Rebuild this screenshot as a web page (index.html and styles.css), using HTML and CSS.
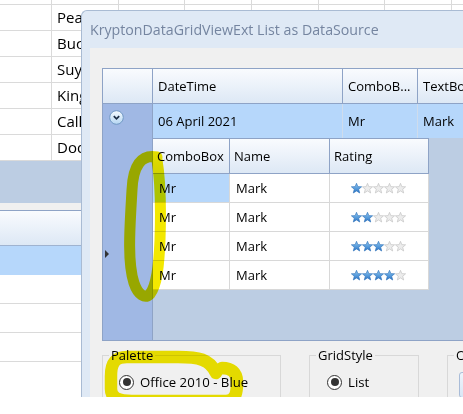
FILE: index.html
```html
<!DOCTYPE html>
<html>
<head>
<meta charset="utf-8">
<title>KryptonDataGridViewExt List as DataSource</title>
<link rel="stylesheet" href="styles.css">
</head>
<body>
<svg class="defs" width="0" height="0" aria-hidden="true">
  <defs>
    <linearGradient id="starBlue" x1="0" y1="0" x2="0" y2="1">
      <stop offset="0" stop-color="#8ecaf4"/>
      <stop offset="1" stop-color="#2a74c6"/>
    </linearGradient>
    <linearGradient id="expGrad" x1="0" y1="0" x2="0" y2="1">
      <stop offset="0" stop-color="#f6fbff"/>
      <stop offset="1" stop-color="#b5d6f2"/>
    </linearGradient>
    <symbol id="starOn" viewBox="0 0 11 11">
      <polygon points="5.5,0.3 6.85,3.64 10.6,3.8 7.69,6.21 8.7,10 5.5,7.9 2.3,10 3.31,6.21 0.4,3.8 4.15,3.64" fill="url(#starBlue)" stroke="#3878bd" stroke-width="0.7"/>
    </symbol>
    <symbol id="starOff" viewBox="0 0 11 11">
      <polygon points="5.5,0.3 6.85,3.64 10.6,3.8 7.69,6.21 8.7,10 5.5,7.9 2.3,10 3.31,6.21 0.4,3.8 4.15,3.64" fill="#ececec" stroke="#c4c4c4" stroke-width="0.7"/>
    </symbol>
  </defs>
</svg>
<div class="desk">
  <div class="sheet">
    <div class="srow first"><div></div><div></div><div></div><div></div><div></div><div></div><div></div><div></div></div>
    <div class="srow"><div></div><div>Peach</div><div></div><div></div><div></div><div></div><div></div><div></div></div>
    <div class="srow"><div></div><div>Buck</div><div></div><div></div><div></div><div></div><div></div><div></div></div>
    <div class="srow"><div></div><div>Suyama</div><div></div><div></div><div></div><div></div><div></div><div></div></div>
    <div class="srow"><div></div><div>King</div><div></div><div></div><div></div><div></div><div></div><div></div></div>
    <div class="srow"><div></div><div>Callahan</div><div></div><div></div><div></div><div></div><div></div><div></div></div>
    <div class="srow"><div></div><div>Dodsworth</div><div></div><div></div><div></div><div></div><div></div><div></div></div>
  </div>
  <div class="band"></div>
  <div class="gap"></div>
  <div class="bgrid">
    <div class="bhead"></div>
    <div class="bsel"></div>
    <div class="brow"></div>
    <div class="brow"></div>
    <div class="brow"></div>
  </div>

  <div class="window">
    <div class="titlebar">KryptonDataGridViewExt List as DataSource</div>
    <div class="client">
      <div class="dgv">
        <div class="dgv-head">
          <div class="hc"></div>
          <div class="hc">DateTime</div>
          <div class="hc">ComboB...</div>
          <div class="hc">TextBox</div>
        </div>
        <div class="dgv-body">
          <div class="rowhead">
            <svg class="exp" width="15" height="15" viewBox="0 0 15 15">
              <circle cx="7.5" cy="7.5" r="6.8" fill="url(#expGrad)" stroke="#7098c3" stroke-width="1"/>
              <path d="M4.8 6.2 L7.5 8.9 L10.2 6.2" fill="none" stroke="#1c2d44" stroke-width="1.7"/>
            </svg>
            <div class="cur"></div>
          </div>
          <div class="maincol">
            <div class="row1">
              <div class="dc">06 April 2021</div>
              <div class="dc">Mr</div>
              <div class="dc">Mark</div>
            </div>
            <div class="detail">
              <div class="sub">
                <div class="sub-head">
                  <div class="hc">ComboBox</div>
                  <div class="hc">Name</div>
                  <div class="hc">Rating</div>
                </div>
                <div class="sub-row">
                  <div class="sc sel">Mr</div>
                  <div class="sc">Mark</div>
                  <div class="sc rate">
                    <svg width="56" height="11" viewBox="0 0 56 11"><use href="#starOn" x="0" width="11" height="11"/><use href="#starOff" x="11" width="11" height="11"/><use href="#starOff" x="22" width="11" height="11"/><use href="#starOff" x="33" width="11" height="11"/><use href="#starOff" x="44" width="11" height="11"/></svg>
                  </div>
                </div>
                <div class="sub-row">
                  <div class="sc">Mr</div>
                  <div class="sc">Mark</div>
                  <div class="sc rate">
                    <svg width="56" height="11" viewBox="0 0 56 11"><use href="#starOn" x="0" width="11" height="11"/><use href="#starOn" x="11" width="11" height="11"/><use href="#starOff" x="22" width="11" height="11"/><use href="#starOff" x="33" width="11" height="11"/><use href="#starOff" x="44" width="11" height="11"/></svg>
                  </div>
                </div>
                <div class="sub-row">
                  <div class="sc">Mr</div>
                  <div class="sc">Mark</div>
                  <div class="sc rate">
                    <svg width="56" height="11" viewBox="0 0 56 11"><use href="#starOn" x="0" width="11" height="11"/><use href="#starOn" x="11" width="11" height="11"/><use href="#starOn" x="22" width="11" height="11"/><use href="#starOff" x="33" width="11" height="11"/><use href="#starOff" x="44" width="11" height="11"/></svg>
                  </div>
                </div>
                <div class="sub-row">
                  <div class="sc">Mr</div>
                  <div class="sc">Mark</div>
                  <div class="sc rate">
                    <svg width="56" height="11" viewBox="0 0 56 11"><use href="#starOn" x="0" width="11" height="11"/><use href="#starOn" x="11" width="11" height="11"/><use href="#starOn" x="22" width="11" height="11"/><use href="#starOn" x="33" width="11" height="11"/><use href="#starOff" x="44" width="11" height="11"/></svg>
                  </div>
                </div>
              </div>
            </div>
          </div>
        </div>
      </div>

      <div class="groups">
        <fieldset class="grp palette">
          <legend>Palette</legend>
          <div class="opt"><span class="radio on"></span><span>Office 2010 - Blue</span></div>
          <div class="opt"><span class="radio"></span><span>Office 2010 - Silver</span></div>
        </fieldset>
        <fieldset class="grp gridstyle">
          <legend>GridStyle</legend>
          <div class="opt"><span class="radio on"></span><span>List</span></div>
        </fieldset>
        <fieldset class="grp other">
          <legend>Other</legend>
          <div class="btn"></div>
        </fieldset>
      </div>
    </div>
  </div>

  <svg class="ink" width="463" height="397" viewBox="0 0 463 397">
    <path d="M157 157 C141 154 133 166 132 190 C130 225 127 262 134 283 C138 295 145 299 150 294 C157 285 159 265 160 240 C161 210 161 184 157 160" fill="none" stroke="#f3e800" stroke-width="11" stroke-linecap="round" stroke-linejoin="round"/>
    <path d="M216 373 C210 359 198 357 178 357 L127 357 C114 357 111 364 111 376 L111 389 C111 398 118 401 132 401 L226 401 C236 401 237 392 237 382 C237 372 231 368 222 368" fill="none" stroke="#f3e800" stroke-width="12.5" stroke-linecap="round" stroke-linejoin="round"/>
  </svg>
</div>
</body>
</html>
```

FILE: styles.css
```css
* {
  box-sizing: border-box;
}

html,
body {
  margin: 0;
  padding: 0;
  background: #ffffff;
}

body {
  font-family: "Open Sans", "Noto Sans", sans-serif;
  color: #000000;
  width: 463px;
  height: 414px;
  overflow: hidden;
}

.defs {
  display: block;
}

.desk {
  position: relative;
  width: 463px;
  height: 414px;
  overflow: hidden;
  background: #ffffff;
}

/* background spreadsheet */
.srow {
  display: grid;
  grid-template-columns: 52px 67px 66px 67px 67px 66px 67px 67px;
  height: 26px;
  border-bottom: 1px solid #dadada;
}

.srow.first {
  height: 5px;
}

.srow > div {
  border-right: 1px solid #dadada;
  font-size: 15px;
  line-height: 25px;
  padding-left: 5px;
  white-space: nowrap;
  overflow: hidden;
}

.band {
  height: 42px;
  background: #bccde3;
}

.gap {
  height: 7px;
  background: #f0f0f0;
}

.bhead {
  height: 36px;
  border-top: 1px solid #8ea3c6;
  border-bottom: 1px solid #9fb3d0;
  background: linear-gradient(#f9fbfe, #dde8f5);
}

.bsel {
  height: 29px;
  background: #b6d7fb;
}

.brow {
  height: 29px;
  border-bottom: 1px solid #dadada;
}

/* window */
.window {
  position: absolute;
  left: 81px;
  top: 10px;
  width: 400px;
  height: 387px;
  background: #dfe9f5;
  border-top: 1px solid #a9bbd3;
  border-left: 1px solid #a9bbd3;
  border-top-left-radius: 6px;
  overflow: hidden;
  display: flex;
  flex-direction: column;
}

.titlebar {
  height: 37px;
  flex: none;
  display: flex;
  align-items: center;
  padding-left: 8px;
  font-size: 14.2px;
  color: #7585a0;
  white-space: nowrap;
}

.client {
  flex: 1;
  margin-left: 8px;
  background: #f0f0f0;
  padding: 20px 0 0 12px;
  display: flex;
  flex-direction: column;
}

/* outer grid */
.dgv {
  height: 273px;
  flex: none;
  border: 1px solid #8ea3c6;
  border-right: none;
  display: flex;
  flex-direction: column;
  font-size: 13px;
}

.dgv-head {
  display: grid;
  grid-template-columns: 50px 190px 75px 120px;
  height: 35px;
  flex: none;
}

.hc {
  background: linear-gradient(#f9fbfe, #dde8f5);
  border-right: 1px solid #8ea3c6;
  border-bottom: 1px solid #8ea3c6;
  display: flex;
  align-items: center;
  padding-left: 5px;
  white-space: nowrap;
  overflow: hidden;
}

.dgv-body {
  flex: 1;
  display: flex;
}

.rowhead {
  width: 50px;
  flex: none;
  background: #a0b8e4;
  border-right: 1px solid #8ea3c6;
  display: flex;
  flex-direction: column;
  align-items: flex-start;
  padding: 6px 0 0 7px;
}

.exp {
  display: block;
  margin-left: -1px;
}

.cur {
  width: 0;
  height: 0;
  margin: 125px 0 0 -5px;
  border-left: 4px solid #333333;
  border-top: 4px solid transparent;
  border-bottom: 4px solid transparent;
}

.maincol {
  flex: 1;
  display: flex;
  flex-direction: column;
}

.row1 {
  height: 34px;
  flex: none;
  display: grid;
  grid-template-columns: 190px 75px 120px;
  background: #b6d7fb;
}

.dc {
  border-right: 1px solid #cfdcec;
  display: flex;
  align-items: center;
  padding-left: 5px;
  white-space: nowrap;
}

.detail {
  flex: 1;
  background: #bccde3;
}

.sub {
  width: 276px;
  border-top: 1px solid #8ea3c6;
}

.sub-head {
  display: grid;
  grid-template-columns: 77px 100px 99px;
  height: 35px;
}

.sub-head .hc {
  padding-left: 4px;
}

.sub-row {
  display: grid;
  grid-template-columns: 77px 100px 99px;
  height: 29px;
  background: #ffffff;
}

.sc {
  border-right: 1px solid #d8d8d8;
  border-bottom: 1px solid #d8d8d8;
  display: flex;
  align-items: center;
  padding-left: 6px;
}

.sc.sel {
  background: #b6d7fb;
}

.sc.rate {
  justify-content: center;
  padding-left: 0;
}

.sc.rate svg {
  display: block;
}

/* group boxes */
.groups {
  display: flex;
  gap: 28px;
  margin-top: 5px;
  font-size: 13px;
}

.grp {
  margin: 0;
  border: 1px solid #d8d8d8;
  min-width: 0;
  flex: none;
  padding: 8px 0 0 16px;
}

.grp legend {
  margin-left: -10px;
  padding: 0 2px;
  line-height: 18px;
  font-size: 13px;
}

.palette {
  width: 179px;
  height: 80px;
}

.gridstyle {
  width: 110px;
  height: 80px;
  padding-left: 17px;
}

.gridstyle legend {
  margin-left: -11px;
}

.other {
  width: 100px;
  height: 80px;
  padding-left: 11px;
}

.other legend {
  margin-left: -5px;
}

.opt {
  display: flex;
  align-items: center;
  gap: 6px;
  height: 20px;
  margin-bottom: 3px;
  font-size: 13.2px;
  white-space: nowrap;
}

.radio {
  width: 15px;
  height: 15px;
  flex: none;
  border: 1px solid #333333;
  border-radius: 50%;
  background: #ffffff;
  display: flex;
  align-items: center;
  justify-content: center;
}

.radio.on::after {
  content: "";
  width: 8px;
  height: 8px;
  border-radius: 50%;
  background: #333333;
}

.btn {
  width: 80px;
  height: 26px;
  border: 1px solid #a9bcd8;
  border-radius: 3px;
  background: linear-gradient(#eef4fb, #d9e6f5);
}

/* hand-drawn highlighter marks */
.ink {
  position: absolute;
  left: 0;
  top: 0;
  mix-blend-mode: multiply;
  pointer-events: none;
}
```
